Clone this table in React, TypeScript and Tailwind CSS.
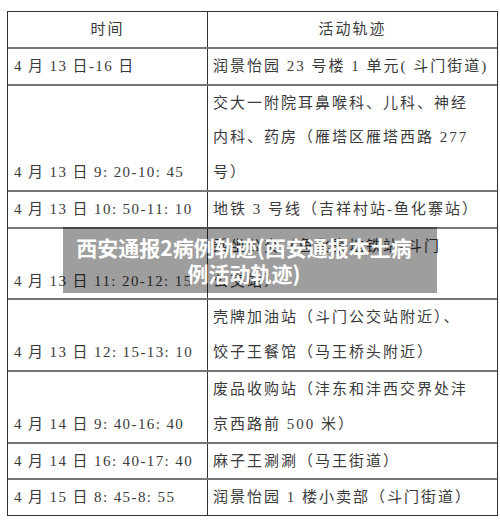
import React from "react";

type Row = { time: string; lines: string[] };

const rows: Row[] = [
  { time: "4 月 13 日-16 日", lines: ["润景怡园 23 号楼 1 单元( 斗门街道)"] },
  {
    time: "4 月 13 日 9: 20-10: 45",
    lines: ["交大一附院耳鼻喉科、儿科、神经", "内科、药房（雁塔区雁塔西路 277", "号）"],
  },
  { time: "4 月 13 日 10: 50-11: 10", lines: ["地铁 3 号线（吉祥村站-鱼化寨站）"] },
  { time: "4 月 13 日 11: 20-12: 15", lines: ["乘坐公交（鱼化寨地铁站-斗门", "公交站）"] },
  { time: "4 月 13 日 12: 15-13: 10", lines: ["壳牌加油站（斗门公交站附近）、", "饺子王餐馆（马王桥头附近）"] },
  { time: "4 月 14 日 9: 40-16: 40", lines: ["废品收购站（沣东和沣西交界处沣", "京西路前 500 米）"] },
  { time: "4 月 14 日 16: 40-17: 40", lines: ["麻子王涮涮（马王街道）"] },
  { time: "4 月 15 日 8: 45-8: 55", lines: ["润景怡园 1 楼小卖部（斗门街道）"] },
];

const font = { fontFamily: '"Liberation Serif", "Noto Sans CJK SC", serif' };

export default function App() {
  return (
    <div className="relative w-[500px] h-[521px] bg-white overflow-hidden">
      <div className="pt-[11px] pl-[7px]">
        <div
          className="w-[491px] border border-[#333] text-[15px] text-[#3a3a3a] leading-[34.8px]"
          style={font}
        >
          <div className="flex border-b-2 border-[#777] tracking-[2px]">
            <div className="w-[200px] border-r border-[#333] text-center">时间</div>
            <div className="flex-1 text-center">活动轨迹</div>
          </div>
          {rows.map((r, i) => (
            <div
              key={i}
              className={
                i === rows.length - 1 ? "flex" : "flex border-b-2 border-[#777]"
              }
            >
              <div className="w-[200px] border-r border-[#333] flex items-end pl-[6px] whitespace-nowrap tracking-[1.4px]">
                {r.time}
              </div>
              <div className="flex-1 pl-[5px] whitespace-nowrap tracking-[2px]">
                {r.lines.map((l, j) => (
                  <div key={j}>{l}</div>
                ))}
              </div>
            </div>
          ))}
        </div>
      </div>
      <div
        className="absolute left-[63px] top-[227px] w-[374px] h-[66px] pr-[12px] bg-[rgba(0,0,0,0.38)] flex flex-col items-center justify-center text-white font-bold text-[21px] leading-[26px]"
        style={{ fontFamily: '"Noto Sans CJK SC", "Noto Sans", sans-serif' }}
      >
        <div className="whitespace-nowrap">西安通报2病例轨迹(西安通报本土病</div>
        <div className="whitespace-nowrap">例活动轨迹)</div>
      </div>
    </div>
  );
}
